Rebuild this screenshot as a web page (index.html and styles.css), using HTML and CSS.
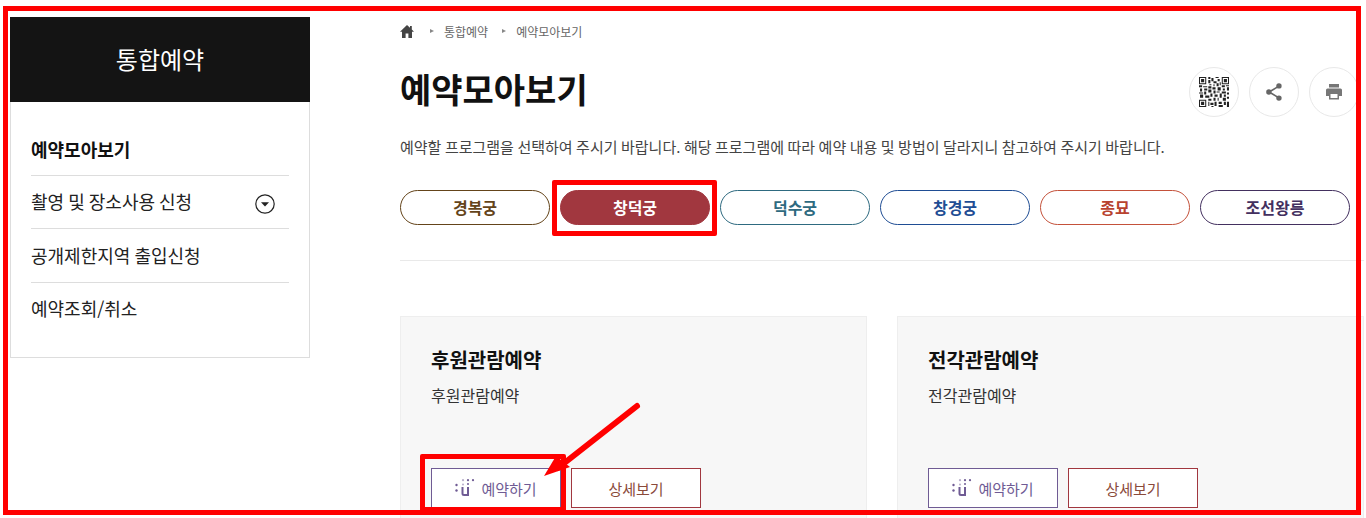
FILE: index.html
```html
<!DOCTYPE html>
<html lang="ko">
<head>
  <meta charset="UTF-8">
  <meta name="viewport" content="width=device-width, initial-scale=1.0">
  <title>예약모아보기</title>
  <link rel="stylesheet" href="styles.css">
</head>
<body>
  <div class="page">
    <aside class="side">
      <h2 class="side-head">통합예약</h2>
      <ul class="side-menu">
        <li class="side-item is-current">예약모아보기</li>
        <li class="side-item">촬영 및 장소사용 신청
          <svg class="side-toggle" viewBox="0 0 20 20" aria-hidden="true">
            <circle cx="10" cy="10" r="9.2" fill="none" stroke="#222" stroke-width="1.2"/>
            <path d="M6 8.2h8L10 12.4z" fill="#222"/>
          </svg>
        </li>
        <li class="side-item">공개제한지역 출입신청</li>
        <li class="side-item">예약조회/취소</li>
      </ul>
    </aside>

    <main class="main">
      <nav class="crumbs">
        <svg class="crumb-home" viewBox="0 0 14 13" aria-hidden="true">
          <path d="M7 0L0 6.800h2V13h3.600V8.600h2.800V13H12V6.800h2L11.800 4.400V1H10v1.700z" fill="#444"/>
        </svg>
        <span class="crumb">통합예약</span>
        <span class="crumb">예약모아보기</span>
      </nav>

      <div class="title-row">
        <h1 class="title">예약모아보기</h1>
        <div class="actions">
          <span class="round">
            <svg class="qr" viewBox="0 0 29 29" aria-hidden="true">
              <path fill="#222" fill-rule="evenodd" d="M0 0h7v7H0zM1 1v5h5V1zM2 2h3v3H2zM22 0h7v7h-7zM23 1v5h5V1zM24 2h3v3h-3zM0 22h7v7H0zM1 23v5h5v-5zM2 24h3v3H2z"/>
              <path fill="#222" d="M9 0h2v2H9zM12 1h2v3h-2zM16 0h3v1h-3zM18 2h2v2h-2zM9 3h2v3H9zM14 4h3v2h-3zM10 7h2v1h-2zM14 7h1v2h-1zM17 6h2v3h-2zM20 5h1v3h-1zM0 8h3v2H0zM4 9h4v1H4zM9 9h3v2H9zM22 8h3v2h-3zM26 8h3v1h-3zM1 11h2v3H1zM5 11h3v2H5zM13 10h3v2h-3zM18 10h3v3h-3zM23 11h2v2h-2zM27 10h2v3h-2zM0 15h4v1H0zM5 14h2v3H5zM9 12h3v3H9zM14 13h2v3h-2zM17 14h3v1h-3zM22 14h4v2h-4zM27 15h2v2h-2zM1 17h3v3H1zM6 18h4v2H6zM11 16h2v3h-2zM15 17h3v2h-3zM20 16h2v4h-2zM24 17h2v2h-2zM27 19h2v2h-2zM9 21h3v2H9zM14 20h2v3h-2zM18 20h1v3h-1zM23 20h3v3h-3zM9 24h1v4H9zM11 25h3v2h-3zM15 24h2v4h-2zM19 24h3v2h-3zM24 24h2v3h-2zM27 24h2v5h-2zM12 28h2v1h-2zM19 27h4v2h-4z"/>
            </svg>
          </span>
          <span class="round">
            <svg class="act-icon" viewBox="0 0 18 20" aria-hidden="true">
              <path d="M14.500 3.500L3.500 10l11 6.500" fill="none" stroke="#666" stroke-width="1.800"/>
              <circle cx="14.500" cy="3.200" r="3" fill="#666"/>
              <circle cx="3.300" cy="10" r="3" fill="#666"/>
              <circle cx="14.500" cy="16.800" r="3" fill="#666"/>
            </svg>
          </span>
          <span class="round">
            <svg class="act-icon" viewBox="0 0 18 18" aria-hidden="true">
              <path fill="#777" fill-rule="evenodd" d="M4 1h10v3.500H4zM2.500 5.500h13A1.500 1.500 0 0 1 17 7v6h-3v3.500H4V13H1V7a1.500 1.500 0 0 1 1.500-1.500zM5.500 11v4h7v-4z"/>
            </svg>
          </span>
        </div>
      </div>

      <p class="intro">예약할 프로그램을 선택하여 주시기 바랍니다. 해당 프로그램에 따라 예약 내용 및 방법이 달라지니 참고하여 주시기 바랍니다.</p>

      <div class="tabs">
        <span class="tab tab-gyeongbok">경복궁</span>
        <span class="tab tab-changdeok">창덕궁</span>
        <span class="tab tab-deoksu">덕수궁</span>
        <span class="tab tab-changgyeong">창경궁</span>
        <span class="tab tab-jongmyo">종묘</span>
        <span class="tab tab-royal">조선왕릉</span>
      </div>

      <div class="cards">
        <section class="card">
          <h3 class="card-title">후원관람예약</h3>
          <p class="card-text">후원관람예약</p>
          <div class="card-btns">
            <span class="btn btn-book">
              <svg class="btn-icon" viewBox="0 0 20 18" aria-hidden="true">
                <g fill="#6f5b94">
                  <circle cx="1.500" cy="6" r="1.200"/><circle cx="1.500" cy="11.500" r="1.200"/>
                  <circle cx="8" cy="1.200" r="1.100" opacity=".5"/><circle cx="13" cy="1.200" r="1.100"/>
                  <circle cx="18" cy="1.200" r="1.100"/><circle cx="8" cy="5.500" r="1" opacity=".5"/>
                  <circle cx="13" cy="5" r="1"/>
                </g>
                <path d="M7.500 8v6.500a1.500 1.500 0 0 0 1.500 1.500h4V8" fill="none" stroke="#6f5b94" stroke-width="2"/>
              </svg>
              예약하기
            </span>
            <span class="btn btn-more">상세보기</span>
          </div>
        </section>
        <section class="card">
          <h3 class="card-title">전각관람예약</h3>
          <p class="card-text">전각관람예약</p>
          <div class="card-btns">
            <span class="btn btn-book">
              <svg class="btn-icon" viewBox="0 0 20 18" aria-hidden="true">
                <g fill="#6f5b94">
                  <circle cx="1.500" cy="6" r="1.200"/><circle cx="1.500" cy="11.500" r="1.200"/>
                  <circle cx="8" cy="1.200" r="1.100" opacity=".5"/><circle cx="13" cy="1.200" r="1.100"/>
                  <circle cx="18" cy="1.200" r="1.100"/><circle cx="8" cy="5.500" r="1" opacity=".5"/>
                  <circle cx="13" cy="5" r="1"/>
                </g>
                <path d="M7.500 8v6.500a1.500 1.500 0 0 0 1.500 1.500h4V8" fill="none" stroke="#6f5b94" stroke-width="2"/>
              </svg>
              예약하기
            </span>
            <span class="btn btn-more">상세보기</span>
          </div>
        </section>
      </div>
    </main>
  </div>

  <!-- red annotation marks on top of the page -->
  <div class="mark mark-frame"></div>
  <div class="mark mark-tab"></div>
  <div class="mark mark-book"></div>
  <svg class="mark-arrow" viewBox="0 0 1366 518" aria-hidden="true">
    <path d="M637 406L558 468" stroke="#f00" stroke-width="6" stroke-linecap="round" fill="none"/>
    <path d="M544 476L556 456L570 467z" fill="#f00"/>
  </svg>
</body>
</html>
```

FILE: styles.css
```css
* {
  box-sizing: border-box;
}

html, body {
  margin: 0;
  height: 518px;
  overflow: hidden;
  background: #fff;
}

body {
  color: #222;
  font-family: "Noto Sans CJK KR", "Noto Sans", sans-serif;
  position: relative;
}

h1, h2, h3, p, ul {
  margin: 0;
  padding: 0;
}

.page {
  display: flex;
  align-items: flex-start;
  padding: 17px 0 0 10px;
}

/* sidebar */
.side {
  width: 300px;
  flex: none;
  border: 1px solid #ddd;
  border-top: 0;
  margin-right: 90px;
}

.side-head {
  height: 85px;
  margin: 0 -1px;
  background: #141414;
  color: #fff;
  font-size: 24px;
  font-weight: 400;
  line-height: 83px;
  text-align: center;
}

.side-menu {
  list-style: none;
  padding: 20px 20px 21px;
}

.side-item {
  height: 53.500px;
  padding: 0 14px 1px 0;
  display: flex;
  align-items: center;
  justify-content: space-between;
  border-bottom: 1px solid #ddd;
  color: #222;
  font-size: 18px;
  word-spacing: -1px;
}

.side-item:last-child {
  padding-bottom: 3px;
  border-bottom: 0;
}

.is-current {
  padding-top: 2px;
  color: #111;
  font-weight: 700;
}

.side-toggle {
  width: 20px;
  height: 20px;
  margin-top: 5px;
}

/* main column */
.main {
  width: 964px;
  flex: none;
  margin-top: -17px;
}

.crumbs {
  height: 62px;
  display: flex;
  align-items: center;
  color: #666;
  font-size: 12px;
}

.crumb-home {
  width: 14px;
  height: 13px;
  margin-right: 2px;
}

.crumb {
  display: flex;
  align-items: center;
  margin-left: 14px;
}

.crumb::before {
  content: "";
  border-left: 4px solid #888;
  border-top: 2.500px solid transparent;
  border-bottom: 2.500px solid transparent;
  margin-right: 10px;
}

.title-row {
  height: 50px;
  margin-top: 5px;
  display: flex;
  justify-content: space-between;
  align-items: center;
}

.title {
  color: #111;
  font-size: 34px;
  font-weight: 700;
  line-height: 46px;
  margin-top: -7px;
}

.actions {
  display: flex;
  gap: 10px;
  padding-right: 5px;
}

.round {
  width: 50px;
  height: 50px;
  border: 1px solid #e8e8e8;
  border-radius: 50%;
  display: flex;
  align-items: center;
  justify-content: center;
}

.qr {
  width: 30px;
  height: 30px;
}

.act-icon {
  width: 18px;
  height: 18px;
}

.intro {
  margin-top: 18px;
  color: #444;
  font-size: 15px;
  line-height: 24px;
  word-spacing: -0.700px;
  white-space: nowrap;
}

.tabs {
  display: flex;
  gap: 10px;
  margin-top: 31px;
  padding-bottom: 35px;
  border-bottom: 1px solid #e9e9e9;
}

.tab {
  width: 150px;
  height: 35px;
  border: 1px solid;
  border-radius: 18px;
  font-size: 16px;
  font-weight: 700;
  line-height: 33px;
  text-align: center;
}

.tab-gyeongbok { border-color: #64441a; color: #64441a; }
.tab-changdeok { border-color: #a1373f; background: #a1373f; color: #fff; }
.tab-deoksu { border-color: #2e6a80; color: #2e6a80; }
.tab-changgyeong { border-color: #1f4d94; color: #1f4d94; }
.tab-jongmyo { border-color: #c4513a; color: #b8432f; }
.tab-royal { border-color: #43305f; color: #43305f; }

/* program cards */
.cards {
  display: flex;
  gap: 30px;
  margin-top: 55px;
}

.card {
  width: 467px;
  height: 202px;
  flex: none;
  padding: 29px 30px 0;
  background: #f7f7f7;
  border: 1px solid #eee;
  border-bottom: 0;
}

.card-title {
  color: #111;
  font-size: 20px;
  font-weight: 700;
  line-height: 28px;
}

.card-text {
  margin-top: 9px;
  color: #333;
  font-size: 16px;
  line-height: 24px;
}

.card-btns {
  display: flex;
  gap: 10px;
  margin-top: 61px;
}

.btn {
  width: 130px;
  height: 40px;
  border: 1px solid;
  background: #fff;
  display: flex;
  align-items: center;
  justify-content: center;
  font-size: 15px;
  color: #555;
}

.btn-book {
  border-color: #6f5b94;
  color: #6f5b94;
}

.btn-more {
  border-color: #a1373f;
  color: #8a4a3a;
}

.btn-icon {
  width: 20px;
  height: 18px;
  margin-right: 6px;
}

/* annotations */
.mark {
  position: absolute;
  border: 5px solid #f00;
  pointer-events: none;
}

.mark-frame {
  left: 3px;
  top: 6px;
  width: 1358px;
  height: 509px;
}

.mark-tab {
  left: 552px;
  top: 180px;
  width: 165px;
  height: 56px;
  border-radius: 2px;
}

.mark-book {
  left: 420px;
  top: 454px;
  width: 146px;
  height: 58px;
  border-radius: 2px;
}

.mark-arrow {
  position: absolute;
  left: 0;
  top: 0;
  width: 1366px;
  height: 518px;
  pointer-events: none;
}
```
